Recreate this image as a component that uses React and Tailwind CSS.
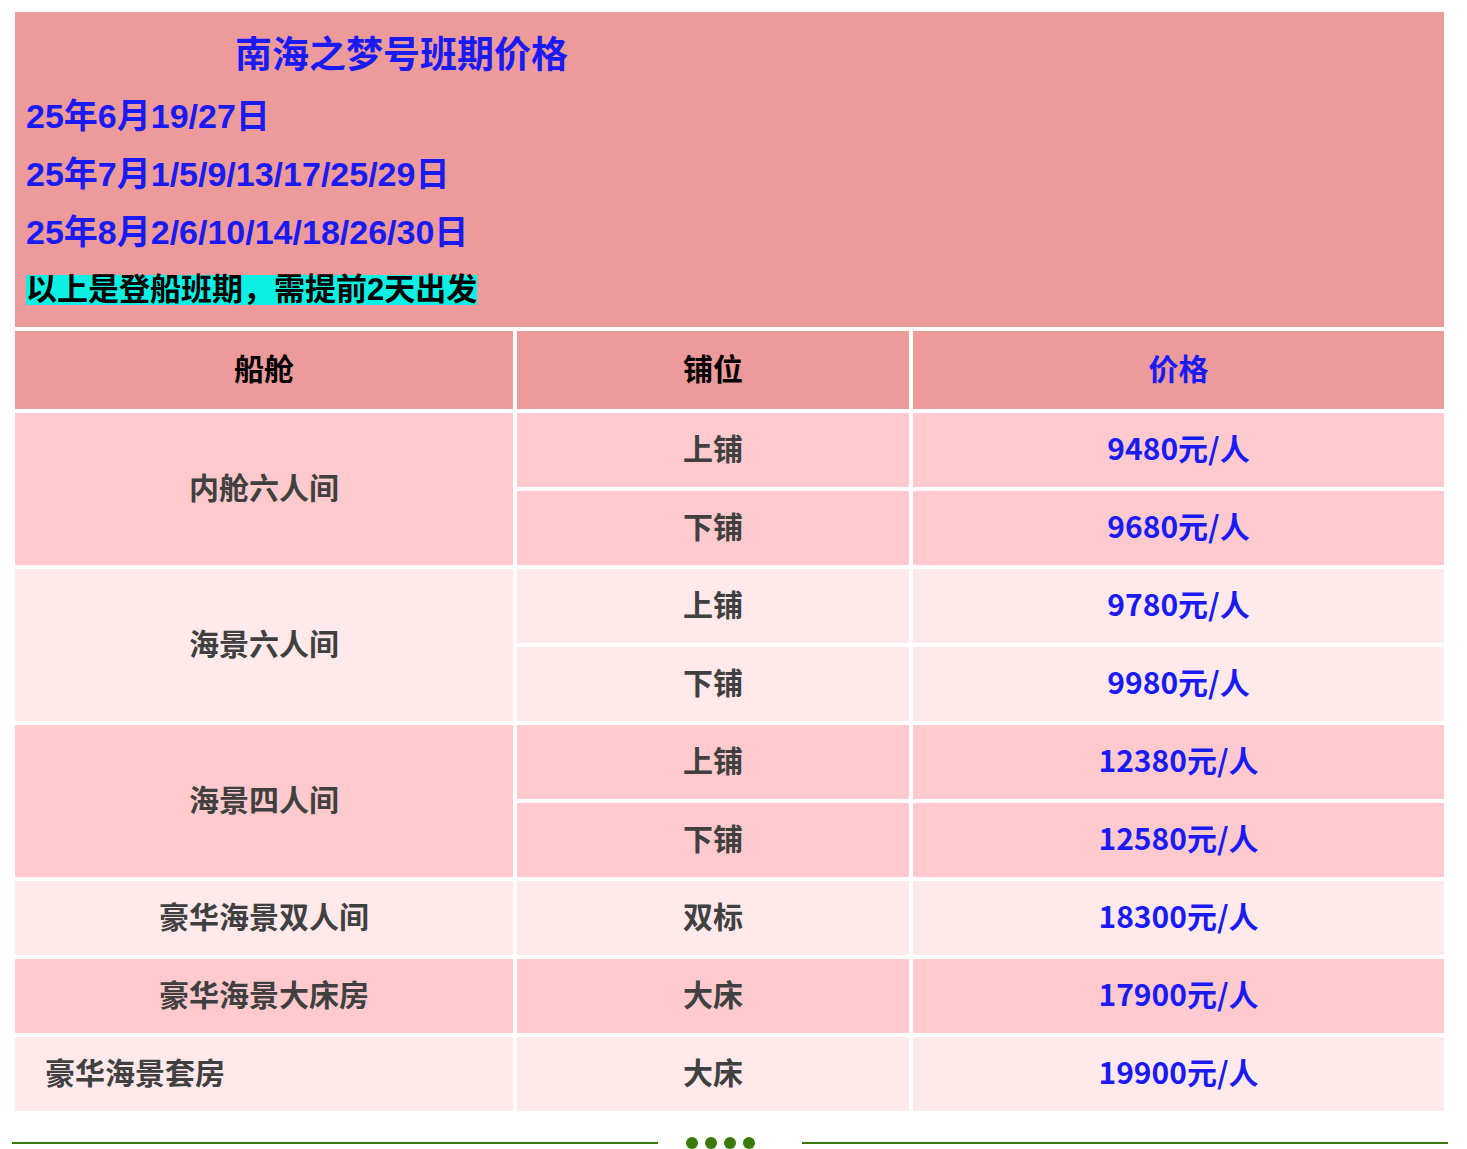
import React from "react";

const font = { fontFamily: '"Noto Sans CJK SC", "Liberation Sans", sans-serif' };
const latinFirst = { fontFamily: '"Liberation Sans", "Noto Sans CJK SC", sans-serif' };

const DARK = "bg-[#fecacd]";
const LIGHT = "bg-[#ffe9eb]";

const rows = [
  { room: "内舱六人间", bg: DARK, items: [["上铺", "9480元/人"], ["下铺", "9680元/人"]] },
  { room: "海景六人间", bg: LIGHT, items: [["上铺", "9780元/人"], ["下铺", "9980元/人"]] },
  { room: "海景四人间", bg: DARK, items: [["上铺", "12380元/人"], ["下铺", "12580元/人"]] },
  { room: "豪华海景双人间", bg: LIGHT, items: [["双标", "18300元/人"]] },
  { room: "豪华海景大床房", bg: DARK, items: [["大床", "17900元/人"]] },
  { room: "豪华海景套房", bg: LIGHT, left: true, items: [["大床", "19900元/人"]] },
];

export default function App() {
  return (
    <div className="bg-white min-h-[1149px] pt-2 pl-[11px]" style={font}>
      <table className="table-fixed border-separate border-spacing-[4px] w-[1437px] font-bold">
        <colgroup>
          <col className="w-[498px]" />
          <col className="w-[392px]" />
          <col className="w-[531px]" />
        </colgroup>
        <tbody>
          <tr>
            <td colSpan={3} className="bg-[#ec9a9a] h-[315px] align-top p-0">
              <div className="pt-[12px] pl-[11px]">
                <div className="h-[58px] flex items-center pl-[209px] text-[37px] text-[#1a1af5]">
                  南海之梦号班期价格
                </div>
                <div style={latinFirst} className="mt-[5px]">
                  <div className="h-[58px] flex items-center text-[34px] text-[#1a1af5]">
                    25年6月19/27日
                  </div>
                  <div className="h-[58px] flex items-center text-[34px] text-[#1a1af5]">
                    25年7月1/5/9/13/17/25/29日
                  </div>
                  <div className="h-[58px] flex items-center text-[34px] text-[#1a1af5]">
                    25年8月2/6/10/14/18/26/30日
                  </div>
                  <div className="h-[58px] flex items-center text-[31px] text-black">
                    <span className="inline-block bg-[#0cf0e3] h-[30px] leading-[30px]">
                      以上是登船班期，需提前2天出发
                    </span>
                  </div>
                </div>
              </div>
            </td>
          </tr>
          <tr className="text-[30px]">
            <td className="bg-[#ec9a9a] h-[78px] text-center align-middle text-black p-0 pb-[6px]">船舱</td>
            <td className="bg-[#ec9a9a] h-[78px] text-center align-middle text-black p-0 pb-[6px]">铺位</td>
            <td className="bg-[#ec9a9a] h-[78px] text-center align-middle text-[#1a1af5] p-0 pb-[6px]">价格</td>
          </tr>
          {rows.map((r) =>
            r.items.map((it, i) => (
              <tr key={r.room + i} className="text-[30px]">
                {i === 0 && (
                  <td
                    rowSpan={r.items.length}
                    className={`${r.bg} align-middle text-[#404040] p-0 pb-[6px] ${r.left ? "text-left pl-[30px]" : "text-center"}`}
                  >
                    {r.room}
                  </td>
                )}
                <td className={`${r.bg} h-[74px] text-center align-middle text-[#404040] p-0 pb-[6px]`}>{it[0]}</td>
                <td className={`${r.bg} h-[74px] text-center align-middle text-[#1a1af5] p-0 pb-[6px]`}>{it[1]}</td>
              </tr>
            ))
          )}
        </tbody>
      </table>
      <div className="mt-[22px] ml-[1px] flex items-center h-[12px]">
        <div className="w-[646px] h-[2px] bg-[#3a7a0b]" />
        <div className="ml-[28px] flex gap-[7px]">
          <span className="w-[12px] h-[12px] rounded-full bg-[#3a7a0b]" />
          <span className="w-[12px] h-[12px] rounded-full bg-[#3a7a0b]" />
          <span className="w-[12px] h-[12px] rounded-full bg-[#3a7a0b]" />
          <span className="w-[12px] h-[12px] rounded-full bg-[#3a7a0b]" />
        </div>
        <div className="ml-[47px] w-[646px] h-[2px] bg-[#3a7a0b]" />
      </div>
    </div>
  );
}
